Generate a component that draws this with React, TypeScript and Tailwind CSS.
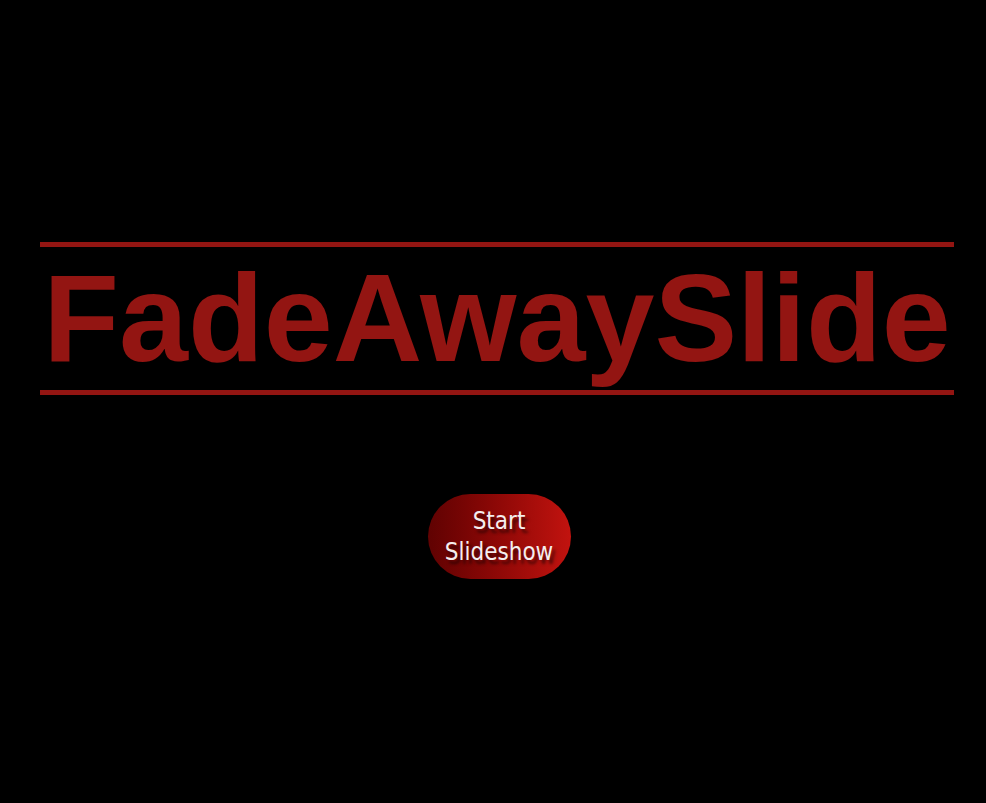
import React from "react";

export default function App() {
  return (
    <div className="min-h-[803px] w-full bg-black flex flex-col items-center pt-[242px]">
      <div className="w-[914px] ml-[8px] flex flex-col">
        <div className="h-[5px] bg-[#931512]" />
        <h1
          className="text-center text-[124px] font-bold text-[#931512] leading-[143px] m-0"
          style={{ fontFamily: '"Liberation Sans", Arial, sans-serif' }}
        >
          FadeAwaySlide
        </h1>
        <div className="h-[5px] bg-[#931512]" />
      </div>
      <button
        className="mt-[99px] ml-[12px] w-[143px] h-[85px] rounded-full bg-gradient-to-r from-[#600202] to-[#c2130f] text-[#f4eeee] text-[24px] leading-[31px] [text-shadow:3px_4px_3px_rgba(0,0,0,0.55)]"
        style={{ fontFamily: '"DejaVu Sans Condensed", "Liberation Sans Narrow", sans-serif' }}
      >
        Start
        <br />
        Slideshow
      </button>
    </div>
  );
}
